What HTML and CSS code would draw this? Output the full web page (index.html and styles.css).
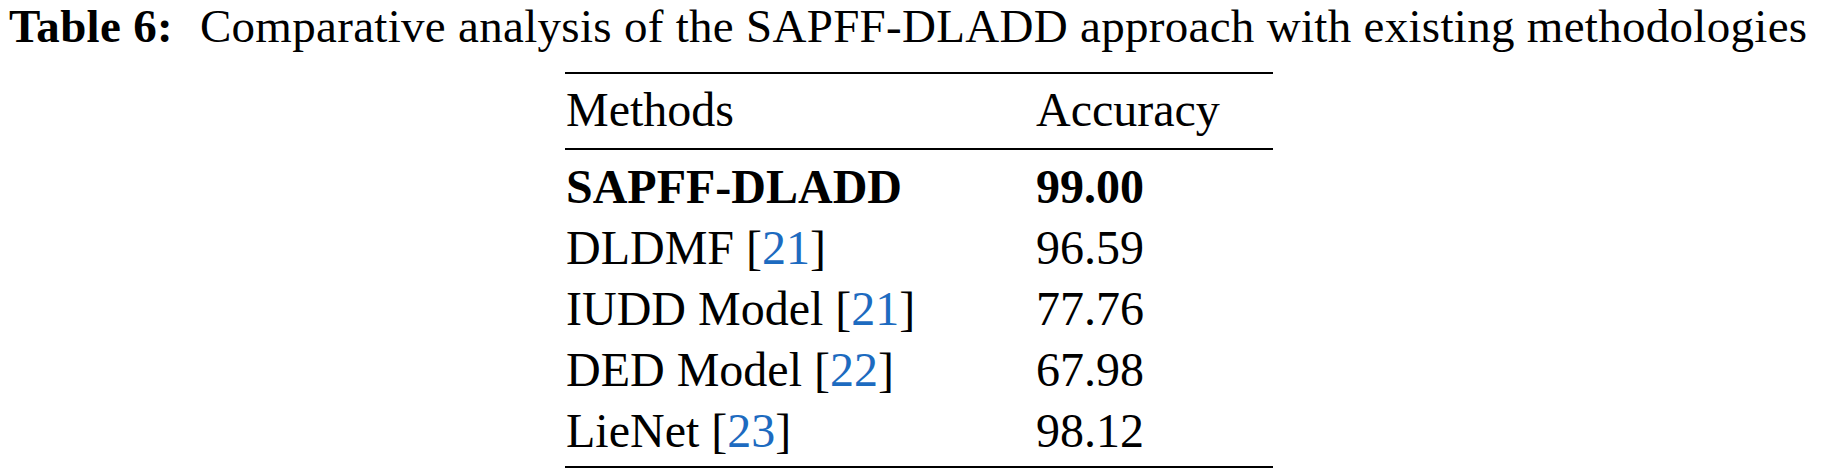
FILE: index.html
```html
<!DOCTYPE html>
<html lang="en">
<head>
  <meta charset="UTF-8" />
  <title>Table 6</title>
  <link rel="stylesheet" href="styles.css">
</head>
<body>
  <p class="caption"><b class="label">Table 6:</b>Comparative analysis of the SAPFF-DLADD approach with existing methodologies</p>

  <table class="results">
    <thead>
      <tr>
        <th class="col-method">Methods</th>
        <th class="col-acc">Accuracy</th>
      </tr>
    </thead>
    <tbody>
      <tr class="ours">
        <td>SAPFF-DLADD</td>
        <td>99.00</td>
      </tr>
      <tr>
        <td>DLDMF [<a class="ref" href="#">21</a>]</td>
        <td>96.59</td>
      </tr>
      <tr>
        <td>IUDD Model [<a class="ref" href="#">21</a>]</td>
        <td>77.76</td>
      </tr>
      <tr>
        <td>DED Model [<a class="ref" href="#">22</a>]</td>
        <td>67.98</td>
      </tr>
      <tr>
        <td>LieNet [<a class="ref" href="#">23</a>]</td>
        <td>98.12</td>
      </tr>
    </tbody>
  </table>
</body>
</html>
```

FILE: styles.css
```css
body {
  margin: 0;
  background: #ffffff;
  color: #000000;
  font-family: "Liberation Serif", "Times New Roman", serif;
}
.caption {
  margin: 0 0 0 9px;
  font-size: 47px;
  line-height: 52px;
  letter-spacing: 0.3px;
  white-space: nowrap;
}
.caption .label {
  margin-right: 27px;
}
.results {
  margin: 20px 0 0 565px;
  width: 708px;
  border-collapse: collapse;
  border-top: 2px solid #000;
  border-bottom: 2px solid #000;
  font-size: 48px;
  line-height: 61px;
}
.results th,
.results td {
  padding: 0;
  text-align: left;
  font-weight: normal;
  white-space: nowrap;
}
.results th {
  padding-top: 5px;
  padding-bottom: 8px;
  border-bottom: 2px solid #000;
}
.results .col-method {
  width: 470px;
  padding-left: 1px;
}
.results td:first-child {
  padding-left: 1px;
}
.results tbody tr:first-child td {
  padding-top: 6px;
}
.results tbody tr:last-child td {
  padding-bottom: 5px;
}
.results tr.ours td {
  font-weight: bold;
}
.ref {
  color: #1d6bc0;
  text-decoration: none;
}
```
